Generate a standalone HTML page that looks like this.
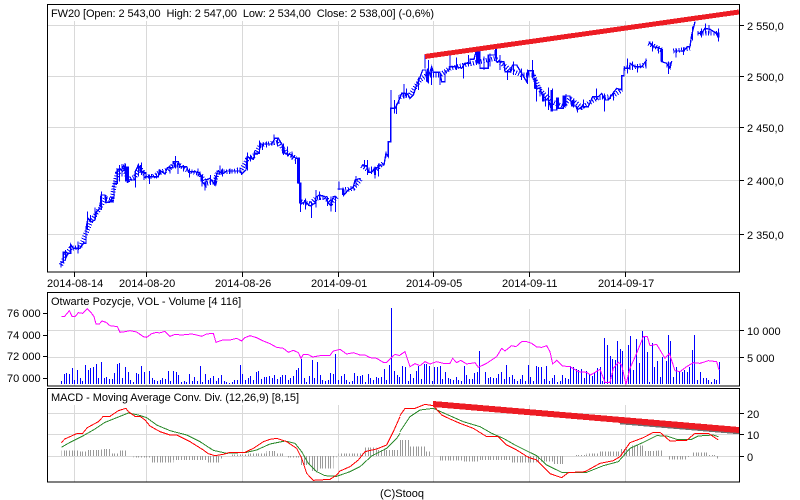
<!DOCTYPE html>
<html><head><meta charset="utf-8"><style>
html,body{margin:0;padding:0;background:#fff;width:800px;height:500px;overflow:hidden}
svg{display:block}
text{font-family:"Liberation Sans",Arial,sans-serif;font-size:11px;fill:#000;white-space:pre}
</style></head><body>
<svg width="800" height="500" viewBox="0 0 800 500" xmlns="http://www.w3.org/2000/svg">
<defs>
<pattern id="st" width="24" height="30" patternUnits="userSpaceOnUse" x="183" y="0">
<rect x="0" y="0" width="3" height="30" fill="#999"/><rect x="9" y="0" width="3" height="30" fill="#999"/><rect x="15" y="0" width="3" height="30" fill="#999"/>
</pattern>
<pattern id="st2" width="24" height="30" patternUnits="userSpaceOnUse" x="15" y="0">
<rect x="0" y="0" width="3" height="30" fill="#999"/><rect x="9" y="0" width="3" height="30" fill="#999"/><rect x="15" y="0" width="3" height="30" fill="#999"/>
</pattern>
</defs>
<rect width="800" height="500" fill="#fff"/>
<!-- grid -->
<g stroke="#d9d9d9" stroke-width="1" fill="none" shape-rendering="crispEdges">
<path d="M74.5 21V272M146.5 21V272M242.5 21V272M338.5 21V272M433.5 21V272M529.5 21V272M625.5 21V272"/>
<path d="M48 25.5H739M48 76.5H739M48 127.5H739M48 180.5H739M48 234.5H739"/>
<path d="M74.5 309V386M146.5 309V386M242.5 309V386M338.5 309V386M433.5 309V386M529.5 309V386M625.5 309V386"/>
<path d="M48 330.5H739M48 357.5H739"/>
<path d="M74.5 405V482M146.5 405V482M242.5 405V482M338.5 405V482M433.5 405V482M529.5 405V482M625.5 405V482"/>
<path d="M48 413.5H739M48 434.5H739M48 456.5H739"/>
</g>
<!-- price left half -->
<g transform="scale(.33333)" fill="none" stroke="#0000ff" stroke-width="4" stroke-linejoin="miter" shape-rendering="crispEdges">
<path d="M183 802V787H190V757H197V775L204 760H212V733L220 745H240L250 730H258V685L264 655L275 665L285 660L290 635L300 625L303 585H315L318 607H330L335 595H342V550H352V507L365 510L372 495L380 540H405V517L415 495L428 518H438V530H450L460 530H475L478 510L495 522L502 503H518L520 485H535L540 500H560L565 515H585L600 520L607 545L618 560V540L630 535L645 555L652 513L670 520L680 513H722L725 522L738 510L742 470L760 478L765 460H778L780 432H800H815L825 415H835L850 440L855 460L875 465L888 475H898V550H903V612L915 605L930 618L945 610L948 592L958 585L975 590L985 610L993 615L1000 590H1010"/>
<path d="M1012 567H1028L1032 585L1045 570L1060 563L1065 540L1082 535"/>
<path d="M1085 497H1100L1105 517H1115L1125 503H1135L1140 495H1152L1158 460L1165 470V425H1172V325H1185L1195 305L1200 292"/>
<g stroke-width="3" stroke-dasharray="3 5">
<path stroke-width="14" d="M183 795L197 765L212 745L240 742L258 700L275 660L300 625L315 595L335 600L342 560L352 520L372 505L385 540L405 530L420 505L438 528L460 530L478 518L502 510L520 495L540 497L565 512L600 522L618 550L645 545L652 517L680 515L722 512L742 478L765 465L780 435L815 430L835 425L855 455L888 475M903 605L930 612L948 595L975 592L993 610L1010 590M1028 570L1060 565L1082 538M1085 497L1105 510L1125 510L1150 490"/>
</g>
<path stroke-width="3" d="M190 755V790M197 750V780M234 725V760M262 635V690M272 645V668M285 622V660M304 575V628M318 585V610M358 495V545M366 492V530M376 490V545M385 500V545M406 515V563M416 490V530M424 487V525M432 510V540M448 525V552M470 520V535M480 508V525M510 495V520M526 468V505M534 490V522M550 495V515M568 510V532M594 505V530M606 525V560M615 545V572M632 525V550M645 530V558M660 497V525M668 505V530M690 505V520M712 502V520M742 457V512M752 465V485M764 452V475M779 422V460M788 430V450M800 425V442M822 403V435M832 415V440M850 430V465M862 440V470M876 455V480M886 472V492M901 550V636M916 595V628M934 605V654M948 570V622M958 575V600M982 590V618M993 590V635M1006 590V636M1017 545V570M1030 565V590M1068 528V560M1093 480V505M1102 480V525M1115 500V522M1125 500V535M1135 490V530M1158 455V473M1173 270V425M1183 300V340M1190 310V342M1197 285V312"/>
<path stroke-width="7" d="M894 475V550M901 550V610M381 500V540M423 495V518M605 525V545M646 540V557M850 440V460M1030 568V585M1125 505V525"/>
</g>
<!-- price right half -->
<g transform="translate(400 0) scale(.33333)" fill="none" stroke="#0000ff" stroke-width="4" shape-rendering="crispEdges">
<path d="M0 295L5 280H15L25 285L30 295L40 285L50 255L60 232L68 210H78L80 245L95 200L100 217H120L125 245H135V213H145L150 200H170L185 205L195 190H210V178H222L228 155H240V205H265V165H285V150L290 185L300 185H312L315 215H330L338 195H350L365 220L380 245L385 212H400L405 265H420L432 300H445L455 330H470V295H475V325H490V288H510L515 318H528L532 330L545 320H565L578 290H595L605 280L615 300H625L635 285L650 265L665 270V227H672V205H690V190L705 200H725L740 180"/>
<path d="M746 125L760 140L785 147V185L800 190L810 205L815 183"/>
<path d="M820 153H850L862 140H870L875 105L885 65M892 100H905L915 85L930 88L945 97L957 110"/>
<path stroke-width="14" stroke-dasharray="3 5" d="M0 290L30 285L60 240L80 225L120 225L150 205L195 195L240 185L285 175L330 210L365 225L400 225L420 270L455 305L490 320L510 295L545 322L595 293L635 290L665 270M672 205L740 195M746 130L785 150M800 195L815 195M820 153L870 145M892 100L957 100"/>
<path stroke-width="3" d="M12 252V295M20 265V292M55 232V270M75 165V205M85 180V250M95 198V255M120 215V255M150 165V210M170 172V210M190 190V235M205 165V195M230 150V190M252 170V210M270 160V200M300 165V210M322 210V240M340 185V225M365 205V240M382 208V252M398 180V235M410 255V305M420 260V290M436 290V320M445 262V330M457 265V335M498 282V320M520 295V322M533 320V338M550 298V325M590 265V300M613 280V335M640 275V302M682 175V220M697 185V210M712 195V218M738 175V205M757 125V155M775 140V160M805 185V222M828 145V172M850 142V165M878 80V122M905 85V112M917 70V100M927 75V100M955 85V125"/>
<path stroke-width="7" d="M84 205V248M235 155V190M288 145V175M406 235V265M430 280V305M455 270V335M495 288V318M520 300V320M785 147V185M955 97V112"/>
</g>
<!-- volume bars -->
<path stroke="#0000ff" stroke-width="1" fill="none" shape-rendering="crispEdges" d="M61.5 384V381M64.5 384V374M66.5 384V373M69.5 384V374M72.5 384V368M74.5 384V380M77.5 384V370M80.5 384V378M82.5 384V381M85.5 384V365M88.5 384V370M90.5 384V368M93.5 384V367M96.5 384V364M98.5 384V378M101.5 384V362M104.5 384V378M106.5 384V377M109.5 384V379M112.5 384V379M114.5 384V373M117.5 384V364M119.5 384V363M122.5 384V378M125.5 384V367M128.5 384V372M130.5 384V380M133.5 384V382M136.5 384V373M138.5 384V374M141.5 384V366M144.5 384V372M146.5 384V384M149.5 384V371M152.5 384V378M154.5 384V380M157.5 384V381M160.5 384V380M162.5 384V378M165.5 384V379M168.5 384V371M170.5 384V381M173.5 384V371M176.5 384V372M178.5 384V375M181.5 384V382M184.5 384V381M186.5 384V382M189.5 384V374M192.5 384V381M194.5 384V377M197.5 384V381M200.5 384V366M202.5 384V382M205.5 384V374M208.5 384V380M210.5 384V378M213.5 384V376M216.5 384V381M218.5 384V378M221.5 384V375M224.5 384V381M226.5 384V382M229.5 384V383M232.5 384V382M234.5 384V380M237.5 384V380M240.5 384V365M242.5 384V374M245.5 384V380M248.5 384V378M250.5 384V376M253.5 384V380M256.5 384V372M258.5 384V371M261.5 384V379M264.5 384V377M266.5 384V377M269.5 384V376M272.5 384V378M274.5 384V375M277.5 384V379M280.5 384V377M282.5 384V375M285.5 384V375M288.5 384V380M290.5 384V378M293.5 384V376M296.5 384V370M298.5 384V368M301.5 384V359M304.5 384V378M306.5 384V382M309.5 384V376M312.5 384V360M314.5 384V378M317.5 384V362M320.5 384V375M322.5 384V380M325.5 384V381M328.5 384V380M330.5 384V373M333.5 384V374M335.5 384V354M338.5 384V380M341.5 384V376M344.5 384V374M346.5 384V380M349.5 384V382M352.5 384V381M354.5 384V373M357.5 384V376M360.5 384V376M362.5 384V375M365.5 384V382M368.5 384V374M370.5 384V378M373.5 384V380M376.5 384V377M378.5 384V378M381.5 384V377M384.5 384V369M386.5 384V380M389.5 384V365M391.5 384V308M394.5 384V371M397.5 384V375M399.5 384V377M402.5 384V366M405.5 384V367M408.5 384V381M410.5 384V374M413.5 384V378M416.5 384V371M418.5 384V366M421.5 384V379M424.5 384V364M426.5 384V364M429.5 384V366M432.5 384V381M434.5 384V367M437.5 384V367M440.5 384V366M442.5 384V379M445.5 384V372M448.5 384V378M450.5 384V379M453.5 384V380M456.5 384V377M458.5 384V380M461.5 384V381M464.5 384V366M466.5 384V375M469.5 384V379M472.5 384V379M474.5 384V373M477.5 384V372M479.5 384V351M482.5 384V384M485.5 384V372M488.5 384V378M490.5 384V377M493.5 384V378M496.5 384V378M498.5 384V374M501.5 384V372M504.5 384V379M506.5 384V365M509.5 384V377M512.5 384V375M514.5 384V379M517.5 384V381M520.5 384V379M522.5 384V375M525.5 384V381M528.5 384V365M530.5 384V377M533.5 384V381M536.5 384V366M538.5 384V367M541.5 384V367M544.5 384V379M546.5 384V366M549.5 384V381M552.5 384V378M554.5 384V375M557.5 384V382M560.5 384V381M562.5 384V375M565.5 384V378M568.5 384V379M570.5 384V366M573.5 384V367M576.5 384V369M578.5 384V370M581.5 384V369M584.5 384V378M586.5 384V371M589.5 384V374M592.5 384V376M594.5 384V373M597.5 384V368M600.5 384V367M602.5 384V381M604.5 384V338M607.5 384V345M610.5 384V356M612.5 384V359M615.5 384V360M617.5 384V341M620.5 384V349M622.5 384V351M625.5 384V381M628.5 384V345M630.5 384V336M633.5 384V370M636.5 384V339M639.5 384V363M642.5 384V331M644.5 384V337M647.5 384V352M649.5 384V382M652.5 384V343M654.5 384V367M657.5 384V361M660.5 384V377M662.5 384V357M666.5 384V361M668.5 384V335M670.5 384V341M673.5 384V377M676.5 384V367M679.5 384V371M682.5 384V372M684.5 384V370M687.5 384V372M689.5 384V367M692.5 384V350M694.5 384V335M697.5 384V380M700.5 384V372M703.5 384V378M706.5 384V378M708.5 384V380M711.5 384V382M714.5 384V379M716.5 384V380M719.5 384V362"/>
<!-- OI -->
<g transform="translate(0 285) scale(.33333)" fill="none" stroke="#ff00ff" stroke-width="3" shape-rendering="crispEdges">
<path d="M184 94H194L208 77L216 94H226L235 83L248 85L262 71L275 85L282 95L288 117H298L306 108L318 112L330 122L352 125L360 142L375 140L390 137L410 141L430 155L440 157L455 146L470 142L478 144L495 139L510 154L525 148L545 150L575 147L590 150L605 154L620 147L640 145L648 172L668 165H690L710 160L725 168L735 158L750 152L770 158L790 168L810 176L830 187L850 190L865 202L880 196L895 203L903 220L910 208L925 209L938 216L960 212L990 211L1000 198L1020 193L1040 207L1060 203L1080 210H1095L1110 218L1130 220L1150 232H1160L1175 217L1185 208L1200 212"/>
</g>
<g transform="translate(400 285) scale(.33333)" fill="none" stroke="#ff00ff" stroke-width="3" shape-rendering="crispEdges">
<path d="M0 210L15 200L30 245L45 236L60 242L75 230L90 237L110 230L130 235H150L158 220L170 233L182 226L200 237L225 233L235 247L260 235L290 215L305 190L315 198L335 182L348 185L365 170H380L395 175L410 186L425 187L440 182L450 200L458 237L470 226L487 243L510 245L535 260L560 262L572 270L600 253L615 292H630L640 250L655 232L665 240L678 298L690 250L710 205L730 155H742L750 182L770 178L795 220L808 205L825 257L840 260L860 245L880 233L900 235L925 227L950 230L957 255"/>
</g>
<!-- histogram -->
<g shape-rendering="crispEdges">
<path fill="url(#st)" transform="translate(0 285) scale(.33333)" d="M184 513V497H240V500H260V495H305V492H330V505H355V497H383V513ZM400 513V517H450V533H480V533H520V525H620V533H660V520H672V513ZM690 513V508H745V505H800V498H830V505H850V513ZM860 513V517H900V540H935V558H960V550H1000V518H1010V513ZM1015 513V505H1090V488H1130V495H1200V513Z"/>
<path fill="url(#st2)" transform="translate(400 285) scale(.33333)" d="M0 513V465H30V485H75V500H95V513ZM115 513V527H190V530H240V525H330V532H410V530H460V537H495V513ZM525 513V510H560V505H600V500H660V492H690V482H730V498H770V497H790V513ZM805 513V523H860V516H868V513ZM878 513V502H925V510H950V513ZM950 513V520H960V513Z"/>
</g>
<!-- MACD lines -->
<g transform="translate(0 285) scale(.33333)" fill="none" stroke-width="3" shape-rendering="crispEdges">
<path stroke="#2e8b2e" d="M184 487L210 472L250 452L280 435L315 412L350 398L385 384L415 390L440 398L470 420L510 437L560 450L600 470L640 496L680 505L740 502L770 495L810 477L855 468L885 475L905 500L925 535L950 560L975 572L1010 574L1050 560L1080 545L1115 513L1160 490L1190 460L1200 445"/>
<path stroke="#ff0000" d="M184 473L194 462L210 455L230 446H247L262 428L295 410L310 394H330L355 377L378 370L385 380L405 394H420L435 405L450 423L480 440L510 450H530L570 470L610 495L625 506L645 512L670 508L690 502H735L760 490L790 470L810 463L830 460L860 470L890 490L905 520L920 565L940 586L990 583L1010 570L1020 558L1050 545L1075 525L1095 500L1130 492L1160 480L1180 440L1200 395"/>
</g>
<g transform="translate(400 285) scale(.33333)" fill="none" stroke-width="3" shape-rendering="crispEdges">
<path stroke="#2e8b2e" d="M0 440L30 395L60 375L100 370L140 388L190 410L240 425L275 445L310 460L345 480L385 500L410 512L440 540L485 562H560L610 542L655 530L690 490L730 472L770 452L800 453L830 463H875L895 453L940 450L955 455"/>
<path stroke="#ff0000" d="M0 392L15 370H45L75 358L100 362L125 390L150 402L180 415L220 430L260 455H295L320 480L350 495L385 517L410 525L450 566L485 578L505 563L555 560L600 535L640 527L660 515L690 473L730 458L760 442H780L810 468L860 466L885 445H925L955 465"/>
</g>
<!-- trend lines -->
<g fill="none" shape-rendering="crispEdges">
<path d="M425 56.5L739 12" stroke="#ed1c24" stroke-width="5"/>
<path d="M620 421L739 431" stroke="#6e6e6e" stroke-width="6.5"/>
<path d="M433 404L739 430" stroke="#ed1c24" stroke-width="6"/>
</g>
<!-- frames -->
<g fill="none" stroke="#000" stroke-width="1" shape-rendering="crispEdges">
<rect x="47.5" y="4.5" width="692" height="267.5"/>
<rect x="47.5" y="292.5" width="692" height="93.5"/>
<rect x="47.5" y="388.5" width="692" height="93.5"/>
<path d="M74.5 272V277M146.5 272V277M242.5 272V277M338.5 272V277M433.5 272V277M529.5 272V277M625.5 272V277"/>
<path d="M739 25.5H744M739 76.5H744M739 127.5H744M739 180.5H744M739 234.5H744"/>
<path d="M739 330.5H744M739 357.5H744M739 413.5H744M739 434.5H744M739 456.5H744"/>
<path d="M43 313.5H47M43 335.5H47M43 356.5H47M43 378.5H47"/>
</g>
<!-- text -->
<text x="51" y="17" textLength="383" lengthAdjust="spacing">FW20 [Open: 2 543,00  High: 2 547,00  Low: 2 534,00  Close: 2 538,00] (-0,6%)</text>
<text x="51" y="305">Otwarte Pozycje, VOL - Volume [4 116]</text>
<text x="51" y="401" textLength="248" lengthAdjust="spacing">MACD - Moving Average Conv. Div. (12,26,9) [8,15]</text>
<text x="47" y="287">2014-08-14</text>
<text x="119" y="287">2014-08-20</text>
<text x="215" y="287">2014-08-26</text>
<text x="311" y="287">2014-09-01</text>
<text x="406" y="287">2014-09-05</text>
<text x="502" y="287">2014-09-11</text>
<text x="598" y="287">2014-09-17</text>
<text x="747" y="30">2 550,0</text>
<text x="747" y="81">2 500,0</text>
<text x="747" y="132">2 450,0</text>
<text x="747" y="185">2 400,0</text>
<text x="747" y="239">2 350,0</text>
<text x="7" y="317">76 000</text>
<text x="7" y="339">74 000</text>
<text x="7" y="360">72 000</text>
<text x="7" y="382">70 000</text>
<text x="747" y="335">10 000</text>
<text x="747" y="362">5 000</text>
<text x="747" y="418">20</text>
<text x="747" y="439">10</text>
<text x="747" y="461">0</text>
<text x="380" y="497">(C)Stooq</text>
</svg>
</body></html>
